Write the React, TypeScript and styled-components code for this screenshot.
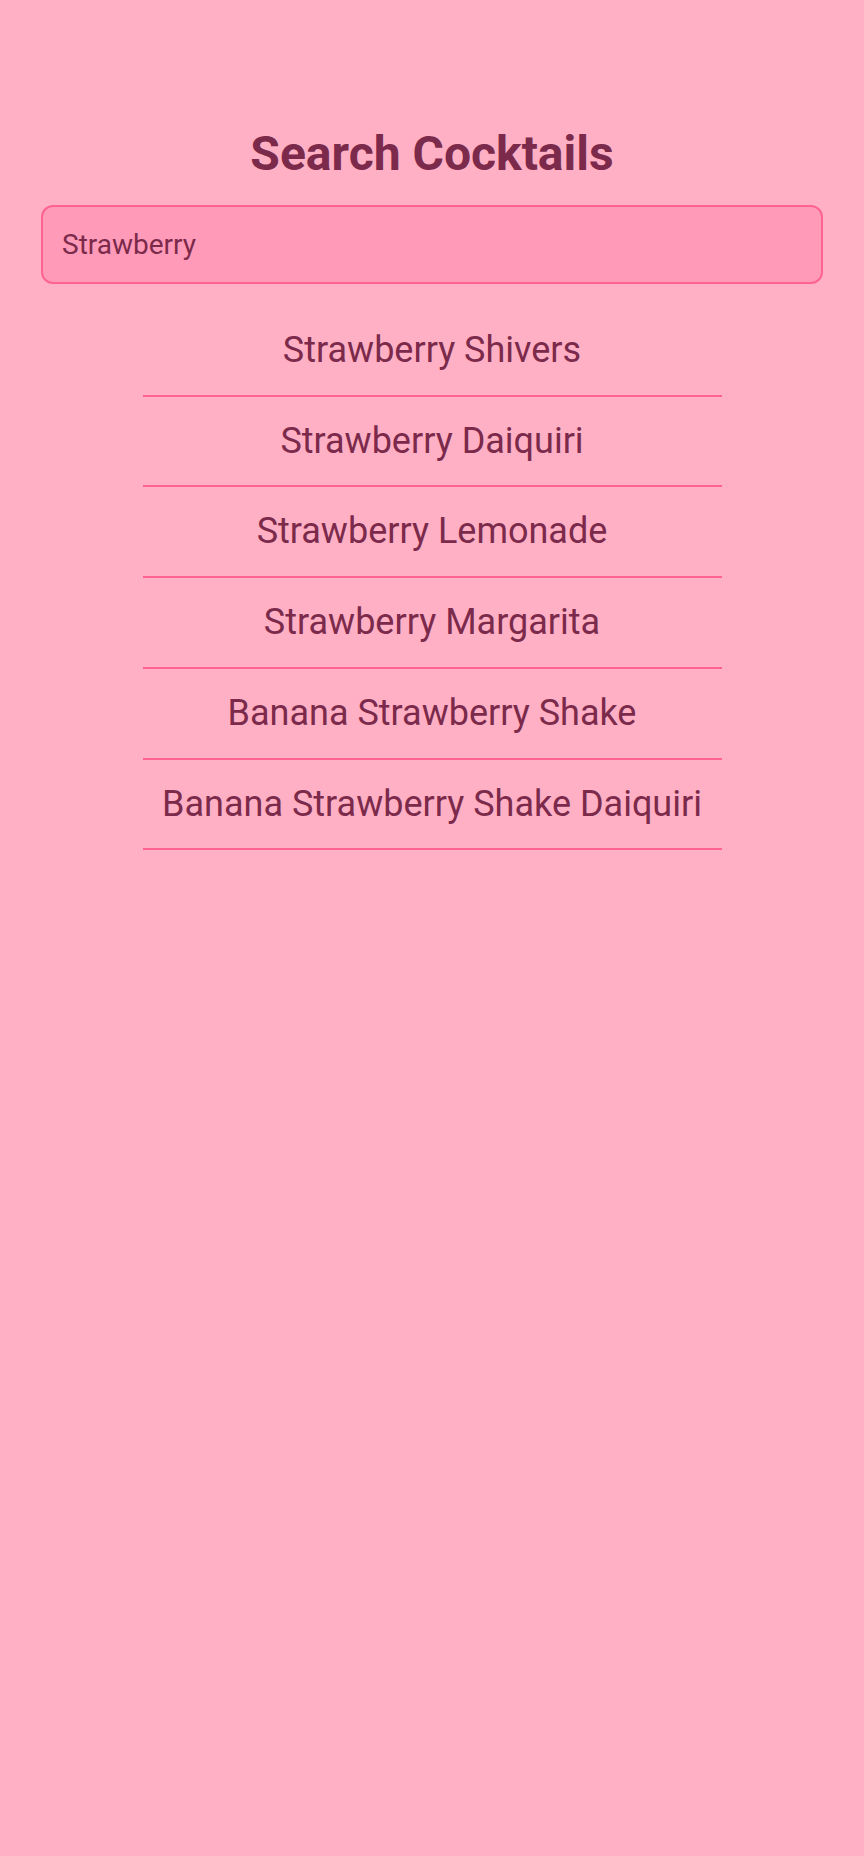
import React, { useState } from "react";
import styled, { createGlobalStyle } from "styled-components";

const GlobalStyle = createGlobalStyle`
  html, body {
    margin: 0;
    padding: 0;
    background: #ffb0c4;
  }
  body {
    font-family: Roboto, "Noto Sans", "Liberation Sans", sans-serif;
    color: #7b2a4b;
  }
  * { box-sizing: border-box; }
`;

const Page = styled.div`
  min-height: 1856px;
  background: #ffb0c4;
  display: flex;
  flex-direction: column;
  align-items: center;
  padding: 126px 41px 0;
`;

const Title = styled.h1`
  margin: 0;
  font-size: 48px;
  line-height: 56px;
  font-weight: 700;
  color: #7b2a4b;
  text-align: center;
`;

const SearchInput = styled.input`
  margin-top: 23px;
  width: 100%;
  height: 79px;
  border: 2px solid #ff6391;
  border-radius: 12px;
  background: #ff9ab8;
  padding: 0 19px;
  font-family: Roboto, "Noto Sans", sans-serif;
  font-size: 28px;
  color: #7b2a4b;
  outline: none;
`;

const List = styled.ul`
  list-style: none;
  margin: 22px 0 0;
  padding: 0;
  width: 579px;
`;

const Item = styled.li`
  padding: 26px 0 25px;
  border-bottom: 2px solid #ff6391;
  text-align: center;
  font-size: 36px;
  line-height: 37.7px;
  color: #7b2a4b;
`;

const results = [
  "Strawberry Shivers",
  "Strawberry Daiquiri",
  "Strawberry Lemonade",
  "Strawberry Margarita",
  "Banana Strawberry Shake",
  "Banana Strawberry Shake Daiquiri",
];

export default function App() {
  const [query, setQuery] = useState("Strawberry");
  return (
    <>
      <GlobalStyle />
      <Page>
        <Title>Search Cocktails</Title>
        <SearchInput value={query} onChange={(e) => setQuery(e.target.value)} />
        <List>
          {results.map((r) => (
            <Item key={r}>{r}</Item>
          ))}
        </List>
      </Page>
    </>
  );
}
